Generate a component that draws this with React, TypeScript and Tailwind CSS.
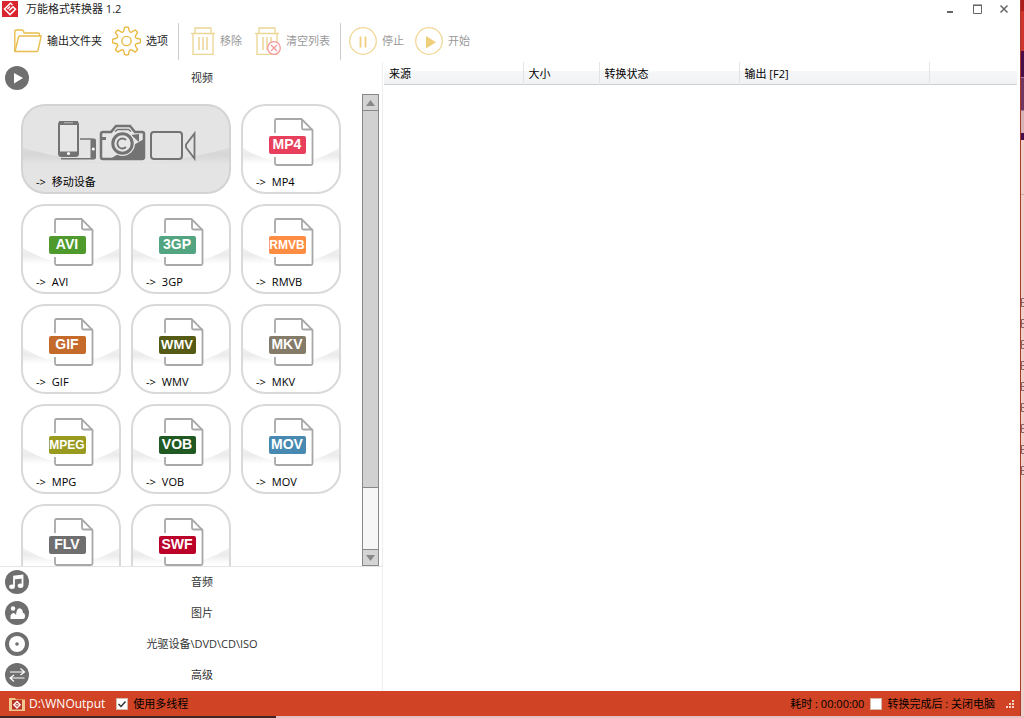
import { useState } from 'react';
import type { ReactNode } from 'react';

interface Format {
  badge: string;
  label?: string;
  color: string;
  size: number;
}

const formats: Format[] = [
  { badge: 'MP4', label: 'MP4', color: '#e8405c', size: 14 },
  { badge: 'AVI', label: 'AVI', color: '#4f9a2c', size: 14 },
  { badge: '3GP', label: '3GP', color: '#52a580', size: 14 },
  { badge: 'RMVB', label: 'RMVB', color: '#fd8d42', size: 12 },
  { badge: 'GIF', label: 'GIF', color: '#c46a2b', size: 14 },
  { badge: 'WMV', label: 'WMV', color: '#555a14', size: 13 },
  { badge: 'MKV', label: 'MKV', color: '#857b69', size: 14 },
  { badge: 'MPEG', label: 'MPG', color: '#999a20', size: 12 },
  { badge: 'VOB', label: 'VOB', color: '#205a22', size: 14 },
  { badge: 'MOV', label: 'MOV', color: '#4789b0', size: 14 },
  { badge: 'FLV', color: '#6f6f6f', size: 14 },
  { badge: 'SWF', color: '#bb0029', size: 14 },
];

const sections = [
  { name: '音频', icon: <MusicIcon /> },
  { name: '图片', icon: <PictureIcon /> },
  { name: '光驱设备\\DVD\\CD\\ISO', icon: <DiscIcon /> },
  { name: '高级', icon: <SwapIcon /> },
];

export default function App() {
  return (
    <div className="flex h-screen w-full flex-col overflow-hidden bg-white font-['Open_Sans','Noto_Sans_CJK_SC',sans-serif] text-[11px] leading-4 text-[#222]">
      <div className="flex min-h-0 flex-1">
        <div className="flex min-w-0 flex-1 flex-col">
          <TitleBar />
          <Toolbar />
          <div className="flex min-h-0 flex-1">
            <FormatPanel />
            <main className="min-w-0 flex-1 pr-[3px] pl-px">
              <JobTable />
            </main>
          </div>
          <StatusBar />
        </div>
        <DesktopEdge />
      </div>
      <div className="flex h-0.5 shrink-0">
        <div className="w-[27%] bg-[#432420]" />
        <div className="flex-1 bg-[#e6bfc0]" />
      </div>
    </div>
  );
}

function TitleBar() {
  return (
    <header className="flex h-5 shrink-0 items-center pl-0.5">
      <svg width="16" height="16" viewBox="0 0 16 16" className="mb-0.5">
        <rect width="16" height="16" fill="#d9262e" />
        <path d="M10.500 4 8.500 2.200 2.500 8 8 13.600 13.500 8.200 11 5.800 7.200 9.500" fill="none" stroke="#fff" strokeWidth="1.500" />
        <path d="M5.400 8 8 5.500" fill="none" stroke="#fff" strokeWidth="1.300" />
      </svg>
      <h1 className="ml-2 flex-1 pb-0.5">万能格式转换器 1.2</h1>
      <div className="flex gap-[17px] pr-[11px] pb-0.5 text-[#666]">
        <button aria-label="最小化">
          <svg width="10" height="10" viewBox="0 0 10 10">
            <path d="M2 8h6" stroke="currentColor" strokeWidth="2" />
          </svg>
        </button>
        <button aria-label="最大化">
          <svg width="10" height="10" viewBox="0 0 10 10">
            <path d="M1.5 1.5h8v8h-8z" fill="none" stroke="currentColor" />
            <path d="M1 1.200h9" stroke="currentColor" strokeWidth="1.500" />
          </svg>
        </button>
        <button aria-label="关闭">
          <svg width="10" height="10" viewBox="0 0 10 10">
            <path d="m1.500 1.500 7 7M8.500 1.500l-7 7" stroke="currentColor" strokeWidth="1.500" />
          </svg>
        </button>
      </div>
    </header>
  );
}

function ToolButton({ icon, label, disabled }: { icon: ReactNode; label: string; disabled?: boolean }) {
  return (
    <button disabled={disabled} className="flex items-center gap-[5px] disabled:text-[#999]">
      {icon}
      <span>{label}</span>
    </button>
  );
}

function Toolbar() {
  return (
    <div className="flex h-[42px] shrink-0 items-center pl-3.5">
      <div className="flex gap-2.5">
        <ToolButton icon={<FolderIcon />} label="输出文件夹" />
        <ToolButton icon={<GearIcon />} label="选项" />
      </div>
      <div className="mr-3 ml-2.5 h-[37px] w-px bg-[#ccc]" />
      <div className="flex gap-[13px]">
        <ToolButton disabled icon={<TrashIcon />} label="移除" />
        <ToolButton disabled icon={<TrashIcon clear />} label="清空列表" />
      </div>
      <div className="mr-2 ml-2.5 h-[37px] w-px bg-[#ccc]" />
      <div className="flex gap-[11px]">
        <ToolButton
          disabled
          label="停止"
          icon={
            <svg width="28" height="28" viewBox="0 0 28 28">
              <circle cx="14" cy="14" r="13.3" fill="none" stroke="#f1d795" strokeWidth="1.300" />
              <path d="M11.500 9.500v11M16.500 9.500v11" stroke="#f0d080" strokeWidth="1.800" />
            </svg>
          }
        />
        <ToolButton
          disabled
          label="开始"
          icon={
            <svg width="28" height="28" viewBox="0 0 28 28">
              <circle cx="14" cy="14" r="13.3" fill="none" stroke="#f1d795" strokeWidth="1.300" />
              <path d="M11 9v12.500L21 15.200z" fill="#f0cf7c" />
            </svg>
          }
        />
      </div>
    </div>
  );
}

function FormatPanel() {
  return (
    <aside className="flex w-[383px] shrink-0 flex-col border-r border-[#eee]">
      <SectionHeader name="视频" icon={<PlayIcon />} />
      <div className="flex min-h-0 flex-1 border-b border-[#e5e5e5]">
        <div className="min-h-0 flex-1 overflow-hidden">
          <div className="grid grid-cols-[100px_100px_100px] gap-2.5 px-[21px] pt-2.5">
            <DeviceTile />
            {formats.map((format) => (
              <FormatTile key={format.badge} format={format} />
            ))}
          </div>
        </div>
        <ScrollBar />
      </div>
      {sections.map((section) => (
        <SectionHeader key={section.name} name={section.name} icon={section.icon} />
      ))}
    </aside>
  );
}

function SectionHeader({ name, icon }: { name: string; icon: ReactNode }) {
  return (
    <button className="flex h-[31px] shrink-0 items-center pr-[7px] pb-0.5 pl-[5px] text-[#333] first:h-8 first:pb-0">
      <svg width="24" height="24" viewBox="0 0 24 24" className="shrink-0">
        <circle cx="12" cy="12" r="12" fill="#6f6f6f" />
        {icon}
      </svg>
      <span className="flex-1 text-center">{name}</span>
    </button>
  );
}

// soft highlight band that curves down towards the middle of a tile
function Sheen({ id, width, fill }: { id: string; width: number; fill: string }) {
  return (
    <>
      <defs>
        <linearGradient id={id} x1="0" y1="42" x2="0" y2="60" gradientUnits="userSpaceOnUse">
          <stop offset="0" stopColor={fill} stopOpacity="0.5" />
          <stop offset="0.5" stopColor={fill} />
          <stop offset="1" stopColor={fill} stopOpacity="0" />
        </linearGradient>
      </defs>
      <path d={`M2 44Q${width / 2} 74 ${width - 2} 44V60H2z`} fill={`url(#${id})`} />
    </>
  );
}

function DeviceTile() {
  return (
    <button className="relative col-span-2 h-[90px] overflow-hidden rounded-3xl bg-[#e4e4e4] text-left text-black">
      <svg viewBox="0 0 210 90" className="block h-[90px] w-full">
        <Sheen id="sheen-device" width={210} fill="#d6d6d6" />
        <rect x="1" y="1" width="208" height="88" rx="23" fill="none" stroke="#d3d3d3" strokeWidth="2" />
        {/* phones */}
        <rect x="38" y="18" width="19" height="34" rx="2.500" fill="#e6e6e6" stroke="#737373" strokeWidth="2" />
        <path d="M38 19h19M38 49.500h19" stroke="#737373" strokeWidth="4" />
        <path d="M43 18.800h9" stroke="#bbb" />
        <circle cx="47.500" cy="49.500" r="1.500" fill="#fff" />
        <path d="M59 35h12M40 54.700h32" stroke="#737373" strokeWidth="1.500" />
        <rect x="69.500" y="34.500" width="5.500" height="21" rx="2" fill="#737373" />
        <circle cx="72.300" cy="45" r="1.500" fill="#fff" />
        {/* camera */}
        <path d="M82 28h8l5-6h14l5 6h7q2 0 2 2v23q0 2-2 2H82q-2 0-2-2V30q0-2 2-2z" fill="#e6e6e6" stroke="#737373" strokeWidth="2.500" />
        <path d="M94 27.500l2.500-2h11l2.500 2" fill="none" stroke="#737373" strokeWidth="1.500" />
        <path d="M123 35v20H89l10-6z" fill="#737373" />
        <path d="M81 33h4v3h-4z" fill="#737373" />
        <path d="M110 31l8-1v8z" fill="#737373" />
        <circle cx="101.500" cy="39.500" r="12.500" fill="#e6e6e6" />
        <circle cx="101.500" cy="39.500" r="9.700" fill="#e6e6e6" stroke="#737373" strokeWidth="3" />
        <path d="M105 36a5 5 0 1 0 0 7" fill="none" stroke="#737373" strokeWidth="1.800" />
        {/* camcorder */}
        <rect x="130" y="28" width="31" height="27" rx="3" fill="none" stroke="#737373" strokeWidth="2" />
        <path d="M173.500 29.500v25L165 43.500v-3z" fill="none" stroke="#737373" strokeWidth="1.800" />
      </svg>
      <TileLabel text="移动设备" />
    </button>
  );
}

function FormatTile({ format }: { format: Format }) {
  return (
    <button className="relative h-[90px] rounded-3xl bg-white text-left text-black">
      <svg viewBox="0 0 100 90" className="block h-[90px] w-full">
        <Sheen id={`sheen-${format.badge}`} width={100} fill="#ebebeb" />
        <rect x="1" y="1" width="98" height="88" rx="23" fill="none" stroke="#d9d9d9" strokeWidth="2" />
        <path d="M34 29V16.500q0-1.500 1.500-1.500H60.500L71.500 26V59.500q0 1.500-1.500 1.500H35.500q-1.500 0-1.500-1.500V53" fill="#fff" stroke="#a8a8a8" strokeWidth="1.800" />
        <path d="M61 15v9q0 1.500 1.500 1.500h9" fill="none" stroke="#a8a8a8" strokeWidth="1.800" />
        <rect x="28" y="32" width="37" height="18" rx="2" fill={format.color} />
        <text
          x="46"
          y="45"
          textAnchor="middle"
          fontFamily="Liberation Sans, sans-serif"
          fontWeight="bold"
          fontSize={format.size}
          fill="#fff"
        >
          {format.badge}
        </text>
      </svg>
      {format.label && <TileLabel text={format.label} />}
    </button>
  );
}

function TileLabel({ text }: { text: string }) {
  return (
    <span className="absolute top-[70px] left-[15px] flex gap-1.5">
      <span>-&gt;</span>
      <span>{text}</span>
    </span>
  );
}

function ScrollBar() {
  return (
    <div className="mr-[3px] flex w-[17px] shrink-0 flex-col border border-[#888] bg-[#f6f6f6]">
      <button aria-label="向上滚动" className="flex h-4 items-center justify-center border-b border-[#888] bg-[#d4d4d4]">
        <svg width="9" height="6" viewBox="0 0 9 6">
          <path d="M0 6 4.500 0 9 6z" fill="#888" />
        </svg>
      </button>
      <div className="flex-1">
        <div className="h-[86%] border-b border-[#888] bg-[#d1d1d1]" />
      </div>
      <button aria-label="向下滚动" className="flex h-4 items-center justify-center border-t border-[#888] bg-[#d4d4d4]">
        <svg width="9" height="6" viewBox="0 0 9 6">
          <path d="M0 0 4.500 6 9 0z" fill="#888" />
        </svg>
      </button>
    </div>
  );
}

function JobTable() {
  return (
    <table className="w-full table-fixed border-b border-[#d0d0d0] bg-linear-to-b from-white from-40% via-[#f6f7f9] via-41% to-[#f1f2f4] text-left text-black">
      <thead>
        <tr className="h-[22px]">
          <th className="w-[139px] border-r border-[#e3e4e6] pt-0.5 pl-[5px] font-normal">来源</th>
          <th className="w-[76px] border-r border-[#e3e4e6] pt-0.5 pl-[5px] font-normal">大小</th>
          <th className="w-[140px] border-r border-[#e3e4e6] pt-0.5 pl-[5px] font-normal">转换状态</th>
          <th className="w-[190px] border-r border-[#e3e4e6] pt-0.5 pl-[5px] font-normal">输出 [F2]</th>
          <th />
        </tr>
      </thead>
    </table>
  );
}

function CheckOption({ label, initial }: { label: string; initial: boolean }) {
  const [checked, setChecked] = useState(initial);

  return (
    <label className="flex items-center gap-[5px]">
      <span className="relative flex size-3">
        <input
          type="checkbox"
          checked={checked}
          onChange={(e) => setChecked(e.target.checked)}
          className="size-3 appearance-none border border-[#d8b8a8] bg-white"
        />
        {checked && (
          <svg viewBox="0 0 12 12" className="pointer-events-none absolute inset-0">
            <path d="m2.500 6 2.500 2.500L9.500 3.500" fill="none" stroke="#333" strokeWidth="1.500" />
          </svg>
        )}
      </span>
      {label}
    </label>
  );
}

function StatusBar() {
  return (
    <footer className="flex h-[25px] shrink-0 items-center bg-[#d04425] pl-[9px] text-black">
      <button className="flex items-center gap-1 text-xs text-white">
        <svg width="16" height="14" viewBox="0 0 16 14">
          <path d="M0 1h6l1 1.500h9V14H0z" fill="#f0c890" />
          <rect x="3" y="3" width="10" height="9.500" fill="#b83226" />
          <path d="m8 4.500 3.200 3.200L8 11 4.800 7.700z" fill="none" stroke="#fff" strokeWidth="1.300" />
          <path d="M6.500 7.800h3" stroke="#fff" />
        </svg>
        D:\WNOutput
      </button>
      <div className="ml-[11px]">
        <CheckOption label="使用多线程" initial />
      </div>
      <div className="ml-auto flex items-center gap-1.5 pr-[5px]">
        <span>耗时 : 00:00:00</span>
        <CheckOption label="转换完成后 : 关闭电脑" initial={false} />
        <svg width="10" height="10" viewBox="0 0 10 10" fill="#f5d5c8" className="ml-1">
          <path d="M7 1h2v2H7zM7 4h2v2H7zM4 4h2v2H4zM7 7h2v2H7zM4 7h2v2H4zM1 7h2v2H1z" />
        </svg>
      </div>
    </footer>
  );
}

// sliver of the desktop that shows past the right window border
function DesktopEdge() {
  return (
    <div className="flex w-1 shrink-0 flex-col overflow-hidden border-l border-[#a8392c] bg-[#f0cfcd]">
      <div className="h-[11px] shrink-0 bg-[#ac1d1b]" />
      <div className="h-10 shrink-0 bg-[#cf352c]" />
      <div className="h-[26px] shrink-0 bg-[#490d4a]" />
      <div className="h-[34px] shrink-0 border-y border-[#a87898] bg-[#703560]" />
      <div className="h-[22px] shrink-0 bg-[#d6b3b4]" />
      <div className="h-[7px] shrink-0 bg-[#490d4a]" />
      <div className="h-[55px] shrink-0 border-b border-[#d8a8a8]" />
      <svg width="3" height="280" viewBox="0 0 3 280" className="mt-[100px] shrink-0">
        {Array.from({ length: 9 }, (_, i) => (
          <path key={i} d={`M3 ${3.5 + i * 21}H.5v8H3M.5 ${7.5 + i * 21}H3`} fill="none" stroke="#8c6468" />
        ))}
      </svg>
    </div>
  );
}

function PlayIcon() {
  return <path d="M9 7v10.500L18 12z" fill="#fff" />;
}

function MusicIcon() {
  return (
    <>
      <path d="M9 16.500V6.500L17.500 5.500v10M9 8.500l8.500-1" fill="none" stroke="#fff" strokeWidth="1.800" />
      <ellipse cx="7" cy="16.700" rx="2.800" ry="2.200" fill="#fff" />
      <ellipse cx="15.500" cy="15.700" rx="2.800" ry="2.200" fill="#fff" />
    </>
  );
}

function PictureIcon() {
  return (
    <>
      <circle cx="8" cy="7.500" r="2.200" fill="#fff" />
      <path d="M5.500 18V14.500q1-2.500 3-2.500 1.500 0 2.500 2Q11.500 7.500 14.500 7.200q3 .3 3.500 4.800 2 0 2 3 0 3-2 3z" fill="#fff" />
    </>
  );
}

function DiscIcon() {
  return (
    <>
      <circle cx="12" cy="12" r="8" fill="#fff" />
      <circle cx="12" cy="12" r="1.800" fill="#6f6f6f" />
    </>
  );
}

function SwapIcon() {
  return <path d="M5 9h14.500M15.500 5.500 19.500 9l-4 3M19.500 15h-14M9 12l-4 3 4 3.500" fill="none" stroke="#fff" strokeWidth="1.200" />;
}

function FolderIcon() {
  return (
    <svg width="28" height="24" viewBox="0 0 28 24" fill="none" stroke="#e9bd4d" strokeWidth="1.400">
      <path d="M.8 22.500V2.500Q.8 1 2.300 1H8q1 0 1.500 1.200L10.200 4H24q1.500 0 1.500 1.500V7" />
      <path d="M1 22.500 4.500 8q.3-1 1.500-1h21.200L24 21.500q-.3 1-1.300 1z" />
    </svg>
  );
}

function GearIcon() {
  const teeth = Array.from({ length: 8 }, (_, i) => {
    const at = (r: number, deg: number) => {
      const a = ((i * 45 + deg) * Math.PI) / 180;
      return `${(15 + r * Math.sin(a)).toFixed(2)} ${(15 - r * Math.cos(a)).toFixed(2)}`;
    };
    return `${i ? 'L' : 'M'}${at(11.5, -13)}L${at(14.3, -8)}Q${at(14.8, 0)} ${at(14.3, 8)}L${at(11.5, 13)}Q${at(8.5, 22.5)} ${at(11.5, 32)}`;
  });

  return (
    <svg width="29" height="30" viewBox="0 0 30 30" fill="none" stroke="#e9b93f" strokeWidth="1.400">
      <path d={`${teeth.join('')}z`} strokeLinejoin="round" />
      <circle cx="15" cy="15" r="4.800" />
    </svg>
  );
}

function TrashIcon({ clear }: { clear?: boolean }) {
  return (
    <svg width={clear ? 26 : 24} height="28" viewBox={clear ? '0 0 26 28' : '0 0 24 28'} fill="none" stroke="#ecd694" strokeWidth="1.300">
      <path d="M0 6.500h24M4 6.500V1h16v5.500M2 6.500v21h20v-21" />
      <path d="M8 10v13M12 10v13M16 10v13" strokeWidth="1.500" />
      {clear && (
        <g stroke="#f29a9a">
          <circle cx="19" cy="21" r="6.300" fill="#fff" />
          <path d="m16 18 6 6M22 18l-6 6" />
        </g>
      )}
    </svg>
  );
}
